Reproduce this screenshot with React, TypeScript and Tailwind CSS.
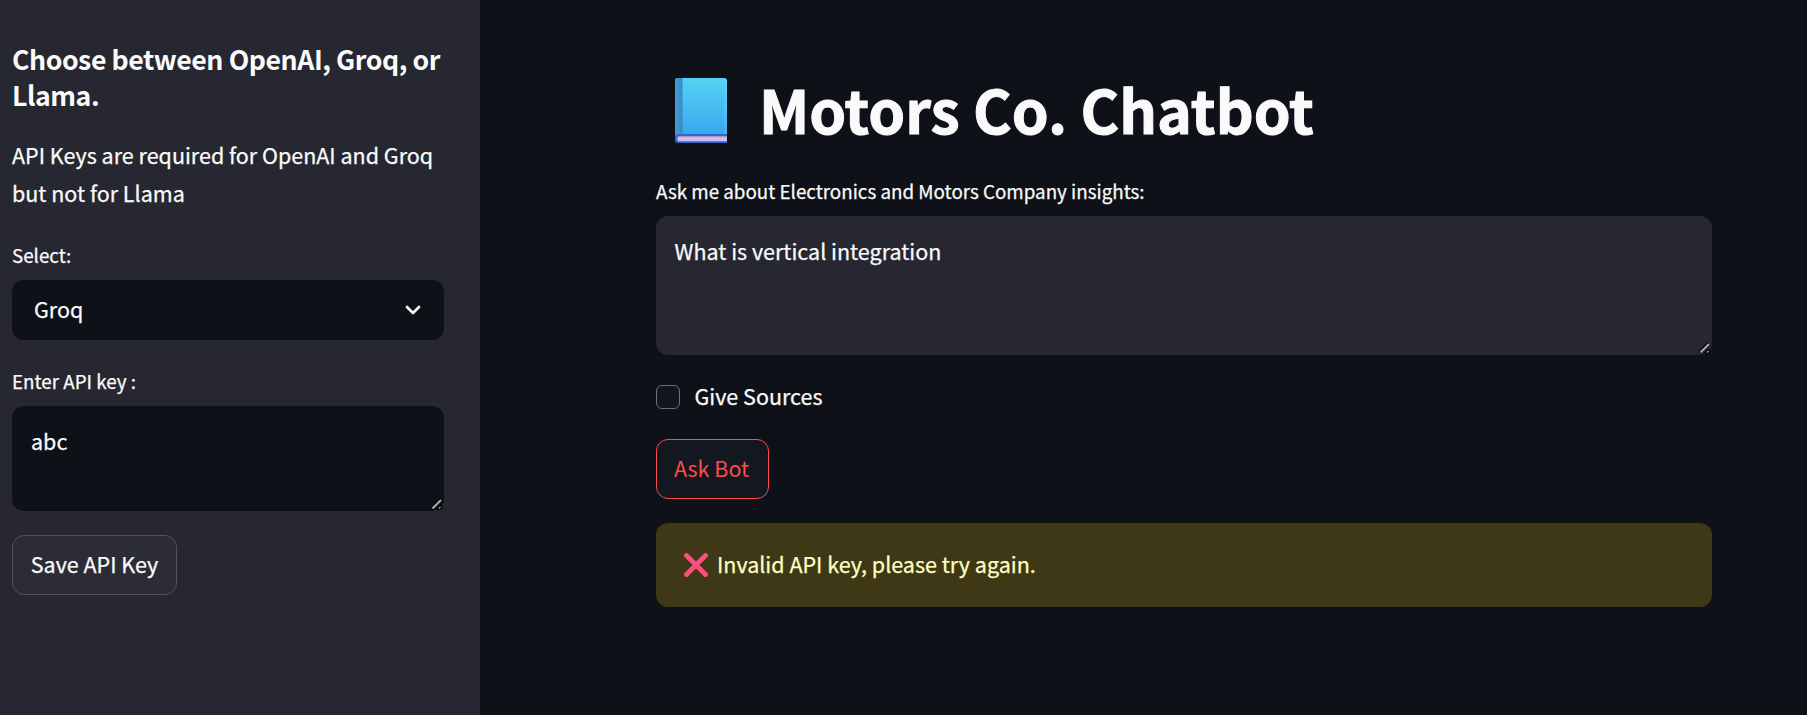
import React from "react";

function ResizeGrip() {
  return (
    <svg className="absolute bottom-[1px] right-[1px]" width="12" height="12" viewBox="0 0 12 12" fill="none">
      <path d="M0.500 11 10 1.500M6.500 12l4-4" stroke="#050608" strokeWidth="4" />
      <path d="M1.500 10.500 10 2" stroke="#a9a9ab" strokeWidth="2.200" />
      <path d="M8 10.500 9.500 9" stroke="#a9a9ab" strokeWidth="1.200" />
    </svg>
  );
}

function Book() {
  return (
    <svg width="52" height="65" viewBox="0 0 52 65" className="ml-[19px] mt-[1px] shrink-0">
      <defs>
        <linearGradient id="cover" x1="0" y1="0" x2="0" y2="1">
          <stop offset="0" stopColor="#55d3f5" />
          <stop offset="1" stopColor="#38a6ef" />
        </linearGradient>
        <linearGradient id="spine" x1="0" y1="0" x2="1" y2="0">
          <stop offset="0" stopColor="#439fd6" />
          <stop offset="1" stopColor="#3a88c8" />
        </linearGradient>
        <linearGradient id="edge" x1="0" y1="0" x2="1" y2="0">
          <stop offset="0" stopColor="#6fe6ff" stopOpacity="0" />
          <stop offset="1" stopColor="#6fe6ff" stopOpacity="0.350" />
        </linearGradient>
      </defs>
      <path d="M3 0H49a3 3 0 0 1 3 3V57H0V3a3 3 0 0 1 3-3Z" fill="url(#cover)" />
      <path d="M48 0H49a3 3 0 0 1 3 3V56H48Z" fill="url(#edge)" />
      <path d="M3 0H7.500V60H0V3a3 3 0 0 1 3-3Z" fill="url(#spine)" />
      <path d="M3 56H52V65H3a3 3 0 0 1-3-3V59a3 3 0 0 1 3-3Z" fill="#3268cc" />
      <path d="M5 58H52V63.300H5a2.650 2.650 0 0 1 0-5.300Z" fill="#d5bdf0" />
      <path d="M4 58H52V59.200H3Z" fill="#a99ad0" />
    </svg>
  );
}

export default function App() {
  return (
    <div className="flex h-[715px] w-full overflow-hidden bg-[#0e1118] font-['Noto_Sans_CJK_SC',sans-serif] text-[21.5px] text-[#fafafa] [-webkit-text-stroke:0.25px]">
      <aside className="flex w-[480px] shrink-0 flex-col bg-[#262730] pl-3 pr-9 pt-[41px]">
        <h3 className="whitespace-nowrap text-[26.7px] font-semibold leading-9 tracking-[-0.44px] [-webkit-text-stroke:0px]">
          Choose between OpenAI, Groq, or<br />Llama.
        </h3>
        <p className="mt-[23px] whitespace-nowrap leading-[38px]">
          API Keys are required for OpenAI and Groq<br />but not for Llama
        </p>
        <label className="mt-[25px] text-[18.8px] leading-9">Select:</label>
        <div className="mt-[7px] flex h-[60px] items-center justify-between rounded-xl bg-[#0e1118] pl-[22px] pr-[22px]">
          <span className="pb-[2px] leading-9">Groq</span>
          <svg width="18" height="12" viewBox="0 0 18 12" fill="none">
            <path d="m3 3 6 6 6-6" stroke="#fafafa" strokeWidth="2.700" strokeLinecap="round" strokeLinejoin="round" />
          </svg>
        </div>
        <label className="mt-[23px] text-[18.8px] leading-9">Enter API key :</label>
        <div className="relative mt-[7px] h-[105px] rounded-xl bg-[#0e1118] px-[19px] pt-[17px] leading-9">
          abc
          <ResizeGrip />
        </div>
        <button className="mt-6 h-[60px] w-[165px] rounded-xl border border-[#51525b] bg-[#2b2c36] pb-[2px] leading-9">Save API Key</button>
      </aside>
      <main className="flex w-[1232px] flex-col pl-44 pt-[77px]">
        <h1 className="flex h-[72px] whitespace-nowrap text-[59px] font-bold leading-[63px] [-webkit-text-stroke:1px]">
          <Book />
          <span className="ml-[32px]">Motors Co. Chatbot</span>
        </h1>
        <label className="mt-[24px] text-[18.8px] leading-9">Ask me about Electronics and Motors Company insights:</label>
        <div className="relative mt-[7px] h-[139px] rounded-xl bg-[#262730] px-[18.5px] pt-[17px] leading-9">
          What is vertical integration
          <ResizeGrip />
        </div>
        <div className="mt-6 flex h-9 items-center">
          <span className="h-6 w-6 rounded-md border border-[#6c6e75] bg-[#12151d]" />
          <span className="ml-[14.5px] pb-[2px] leading-9">Give Sources</span>
        </div>
        <button className="mt-6 h-[60px] w-[113px] rounded-xl border border-[#ff4b4b] bg-[#13171f] pb-[2px] pr-[2px] leading-9 text-[#ff4b4b] [-webkit-text-stroke:0px]">Ask Bot</button>
        <div className="mt-6 flex h-[84px] items-center rounded-xl bg-[#3e3816] pl-7 text-[#ffffc2]">
          <svg width="24" height="24" viewBox="0 0 24 24" fill="none" className="mb-[1px]">
            <path d="m2.500 2.500 19 19m0-19-19 19" stroke="#fb5081" strokeWidth="4.800" strokeLinecap="round" />
          </svg>
          <span className="ml-[9px] pb-[2px]">Invalid API key, please try again.</span>
        </div>
      </main>
    </div>
  );
}
